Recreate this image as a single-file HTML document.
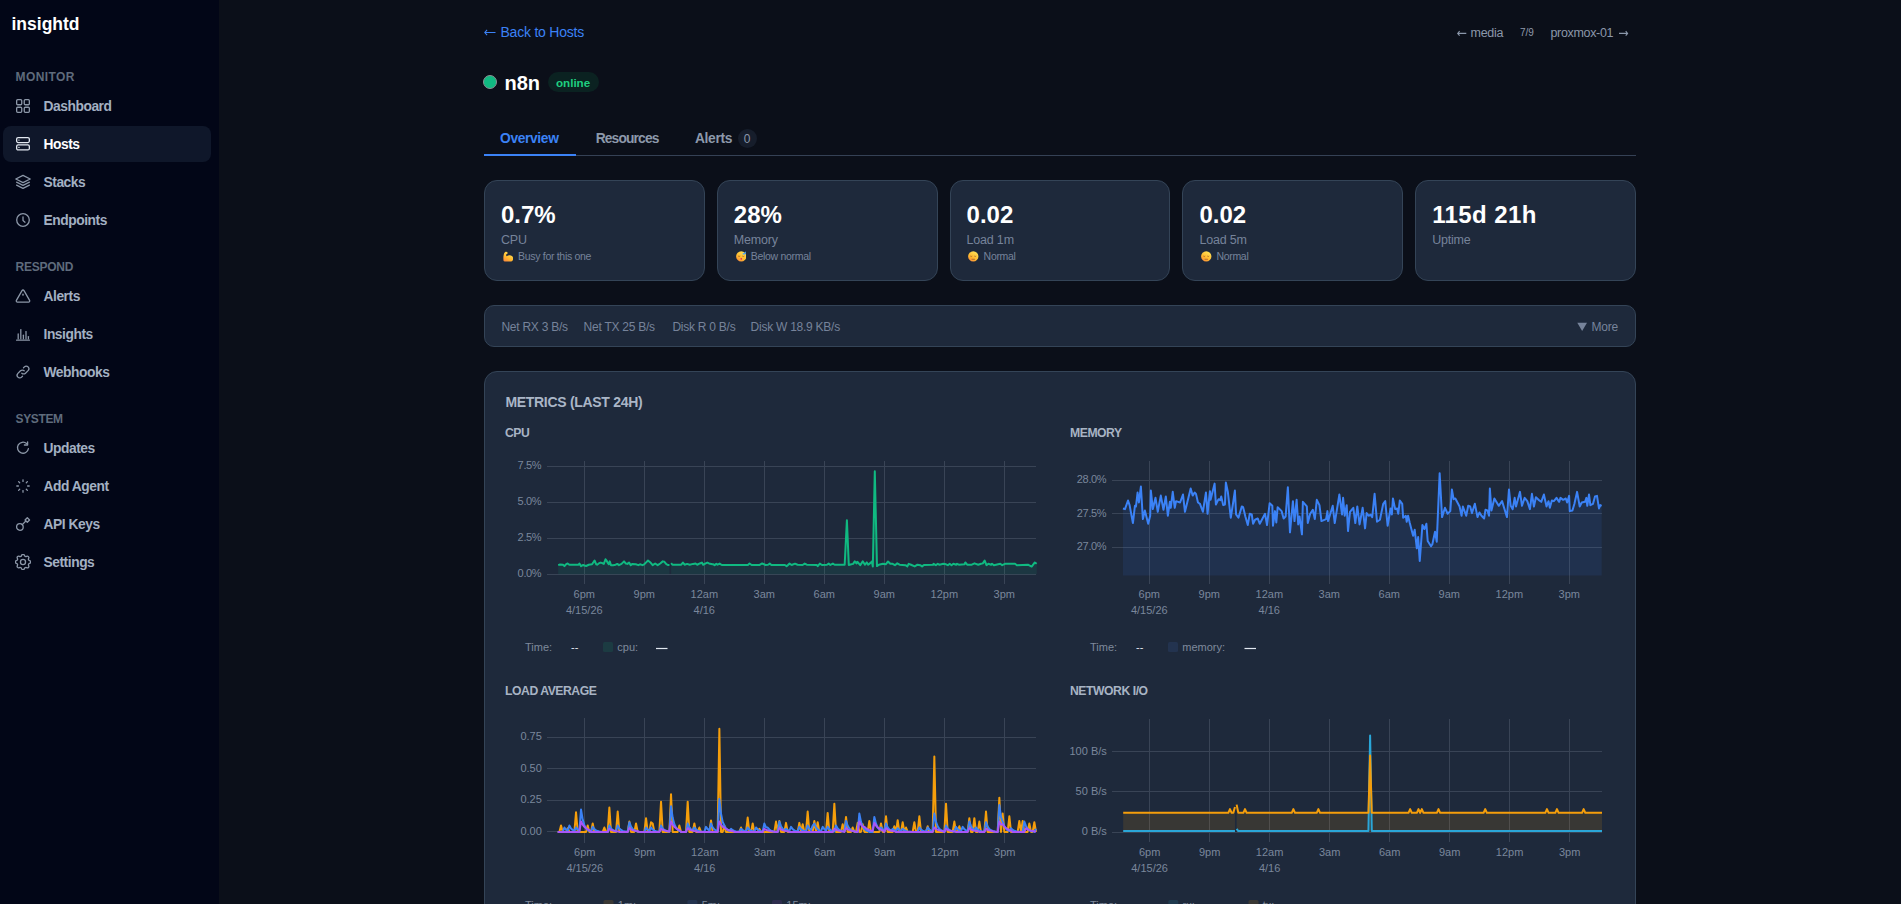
<!DOCTYPE html>
<html><head><meta charset="utf-8"><title>insightd - n8n</title>
<style>
html,body{margin:0;padding:0;width:1901px;height:904px;overflow:hidden;background:#0b0f19;font-family:"Liberation Sans", sans-serif;}
.t{position:absolute;white-space:nowrap;}
</style></head><body>
<div style="position:absolute;left:0;top:0;width:219px;height:904px;background:#020617"></div>
<div class="t" style="left:11.50px;top:15.99px;font-size:17.5px;line-height:17.5px;color:#ffffff;font-weight:700;">insightd</div>
<div style="position:absolute;left:3px;top:126px;width:208px;height:36px;border-radius:8px;background:#0f172a"></div>
<div class="t" style="left:15.50px;top:70.84px;font-size:12px;line-height:12px;color:#5f6b7c;font-weight:700;letter-spacing:0.4px;">MONITOR</div>
<svg style="position:absolute;left:15px;top:98px" width="16" height="16" viewBox="0 0 16 16" fill="none" stroke="#8c97a8" stroke-width="1.3" stroke-linecap="round" stroke-linejoin="round"><rect x="1.65" y="1.65" width="5.1" height="5.1" rx="1"/><rect x="9.25" y="1.65" width="5.1" height="5.1" rx="1"/><rect x="1.65" y="9.25" width="5.1" height="5.1" rx="1"/><rect x="9.25" y="9.25" width="5.1" height="5.1" rx="1"/></svg>
<div class="t" style="left:43.50px;top:99.92px;font-size:13.8px;line-height:13.8px;color:#a3b0c2;font-weight:700;letter-spacing:-0.45px;">Dashboard</div>
<svg style="position:absolute;left:15px;top:136px" width="16" height="16" viewBox="0 0 16 16" fill="none" stroke="#e2e8f0" stroke-width="1.3" stroke-linecap="round" stroke-linejoin="round"><rect x="1.65" y="1.6" width="12.7" height="5.0" rx="1.5"/><rect x="1.65" y="8.9" width="12.7" height="5.0" rx="1.5"/><path d="M3.9 4.1 h0.1"/><path d="M3.9 11.4 h0.1"/></svg>
<div class="t" style="left:43.50px;top:137.92px;font-size:13.8px;line-height:13.8px;color:#ffffff;font-weight:700;letter-spacing:-0.45px;">Hosts</div>
<svg style="position:absolute;left:15px;top:174px" width="16" height="16" viewBox="0 0 16 16" fill="none" stroke="#8c97a8" stroke-width="1.3" stroke-linecap="round" stroke-linejoin="round"><path d="M8 1.4 L15.2 5 L8 8.6 L0.8 5 Z"/><path d="M1.6 8.2 L8 11.4 L14.4 8.2"/><path d="M1.6 11.1 L8 14.3 L14.4 11.1"/></svg>
<div class="t" style="left:43.50px;top:175.92px;font-size:13.8px;line-height:13.8px;color:#a3b0c2;font-weight:700;letter-spacing:-0.45px;">Stacks</div>
<svg style="position:absolute;left:15px;top:212px" width="16" height="16" viewBox="0 0 16 16" fill="none" stroke="#8c97a8" stroke-width="1.3" stroke-linecap="round" stroke-linejoin="round"><circle cx="8" cy="8" r="6.3"/><path d="M8 4.8 V8.6 L10 10.2"/></svg>
<div class="t" style="left:43.50px;top:213.92px;font-size:13.8px;line-height:13.8px;color:#a3b0c2;font-weight:700;letter-spacing:-0.45px;">Endpoints</div>
<div class="t" style="left:15.50px;top:260.84px;font-size:12px;line-height:12px;color:#5f6b7c;font-weight:700;letter-spacing:-0.25px;">RESPOND</div>
<svg style="position:absolute;left:15px;top:288px" width="16" height="16" viewBox="0 0 16 16" fill="none" stroke="#8c97a8" stroke-width="1.3" stroke-linecap="round" stroke-linejoin="round"><path d="M7 2.6 a1.15 1.15 0 0 1 2 0 L14.6 12.4 a1.15 1.15 0 0 1 -1 1.7 H2.4 a1.15 1.15 0 0 1 -1 -1.7 Z"/><path d="M8 6.2 V7.2"/></svg>
<div class="t" style="left:43.50px;top:289.92px;font-size:13.8px;line-height:13.8px;color:#a3b0c2;font-weight:700;letter-spacing:-0.45px;">Alerts</div>
<svg style="position:absolute;left:15px;top:326px" width="16" height="16" viewBox="0 0 16 16" fill="none" stroke="#8c97a8" stroke-width="1.3" stroke-linecap="round" stroke-linejoin="round"><path d="M1.6 14.2 H14.4"/><path d="M3.2 12.8 V8"/><path d="M5.8 12.8 V3.6"/><path d="M8.4 12.8 V9.2"/><path d="M11 12.8 V5.6"/><path d="M13.4 12.8 V10.6"/></svg>
<div class="t" style="left:43.50px;top:327.92px;font-size:13.8px;line-height:13.8px;color:#a3b0c2;font-weight:700;letter-spacing:-0.45px;">Insights</div>
<svg style="position:absolute;left:15px;top:364px" width="16" height="16" viewBox="0 0 16 16" fill="none" stroke="#8c97a8" stroke-width="1.3" stroke-linecap="round" stroke-linejoin="round"><path d="M6.8 9.2 a2.6 2.6 0 0 0 3.7 0 l2.6 -2.6 a2.6 2.6 0 0 0 -3.7 -3.7 l-0.9 0.9"/><path d="M9.2 6.8 a2.6 2.6 0 0 0 -3.7 0 l-2.6 2.6 a2.6 2.6 0 0 0 3.7 3.7 l0.9 -0.9"/></svg>
<div class="t" style="left:43.50px;top:365.92px;font-size:13.8px;line-height:13.8px;color:#a3b0c2;font-weight:700;letter-spacing:-0.45px;">Webhooks</div>
<div class="t" style="left:15.50px;top:412.84px;font-size:12px;line-height:12px;color:#5f6b7c;font-weight:700;letter-spacing:-0.35px;">SYSTEM</div>
<svg style="position:absolute;left:15px;top:440px" width="16" height="16" viewBox="0 0 16 16" fill="none" stroke="#8c97a8" stroke-width="1.3" stroke-linecap="round" stroke-linejoin="round"><path d="M13.4 8.6 A5.5 5.5 0 1 1 11.6 3.6"/><path d="M12.6 1.8 V5 H9.4"/></svg>
<div class="t" style="left:43.50px;top:441.92px;font-size:13.8px;line-height:13.8px;color:#a3b0c2;font-weight:700;letter-spacing:-0.45px;">Updates</div>
<svg style="position:absolute;left:15px;top:478px" width="16" height="16" viewBox="0 0 16 16" fill="none" stroke="#8c97a8" stroke-width="1.3" stroke-linecap="round" stroke-linejoin="round"><path d="M8 1.8 V3.4"/><path d="M8 12.6 V14.2"/><path d="M1.8 8 H3.4"/><path d="M12.6 8 H14.2"/><path d="M3.6 3.6 L4.7 4.7"/><path d="M11.3 11.3 L12.4 12.4"/><path d="M3.6 12.4 L4.7 11.3"/><path d="M11.3 4.7 L12.4 3.6"/></svg>
<div class="t" style="left:43.50px;top:479.92px;font-size:13.8px;line-height:13.8px;color:#a3b0c2;font-weight:700;letter-spacing:-0.45px;">Add Agent</div>
<svg style="position:absolute;left:15px;top:516px" width="16" height="16" viewBox="0 0 16 16" fill="none" stroke="#8c97a8" stroke-width="1.3" stroke-linecap="round" stroke-linejoin="round"><circle cx="4.9" cy="11" r="3.3"/><path d="M7.3 8.6 L10.6 5.3"/><rect x="10.7" y="2.4" width="3.2" height="3.2" transform="rotate(-45 12.3 4)"/></svg>
<div class="t" style="left:43.50px;top:517.92px;font-size:13.8px;line-height:13.8px;color:#a3b0c2;font-weight:700;letter-spacing:-0.45px;">API Keys</div>
<svg style="position:absolute;left:15px;top:554px" width="16" height="16" viewBox="0 0 16 16" fill="none" stroke="#8c97a8" stroke-width="1.3" stroke-linecap="round" stroke-linejoin="round"><g transform="translate(-2.2 -2.2) scale(0.85)" stroke-width="1.55"><path d="M10.325 4.317c.426 -1.756 2.924 -1.756 3.35 0a1.724 1.724 0 0 0 2.573 1.066c1.543 -.94 3.31 .826 2.37 2.37a1.724 1.724 0 0 0 1.065 2.572c1.756 .426 1.756 2.924 0 3.35a1.724 1.724 0 0 0 -1.066 2.573c.94 1.543 -.826 3.31 -2.37 2.37a1.724 1.724 0 0 0 -2.572 1.065c-.426 1.756 -2.924 1.756 -3.35 0a1.724 1.724 0 0 0 -2.573 -1.066c-1.543 .94 -3.31 -.826 -2.37 -2.37a1.724 1.724 0 0 0 -1.065 -2.572c-1.756 -.426 -1.756 -2.924 0 -3.35a1.724 1.724 0 0 0 1.066 -2.573c-.94 -1.543 .826 -3.31 2.37 -2.37c1 .608 2.296 .07 2.572 -1.065z"/><circle cx="12" cy="12" r="3"/></g></svg>
<div class="t" style="left:43.50px;top:555.92px;font-size:13.8px;line-height:13.8px;color:#a3b0c2;font-weight:700;letter-spacing:-0.45px;">Settings</div>
<svg style="position:absolute;left:0;top:0;overflow:visible" width="1" height="1"><path d="M495.5 32.5 H485.1 M487.1 29.9 L484.8 32.5 L487.1 35.1" fill="none" stroke="#3b82f6" stroke-width="1.1"/></svg>
<div class="t" style="left:500.50px;top:25.15px;font-size:14px;line-height:14px;color:#3b82f6;font-weight:400;letter-spacing:-0.22px;">Back to Hosts</div>
<svg style="position:absolute;left:0;top:0;overflow:visible" width="1" height="1"><path d="M1466.3 33.4 H1458.0 M1459.6000000000001 31.2 L1457.7 33.4 L1459.6000000000001 35.6" fill="none" stroke="#8b97aa" stroke-width="1.1"/></svg>
<div class="t" style="left:1470.50px;top:27.42px;font-size:12.5px;line-height:12.5px;color:#8b97aa;font-weight:400;letter-spacing:-0.25px;">media</div>
<div class="t" style="left:1520.00px;top:27.54px;font-size:10px;line-height:10px;color:#8f9aab;font-weight:400;">7/9</div>
<div class="t" style="left:1550.50px;top:27.42px;font-size:12.5px;line-height:12.5px;color:#8b97aa;font-weight:400;letter-spacing:-0.33px;">proxmox-01</div>
<svg style="position:absolute;left:0;top:0;overflow:visible" width="1" height="1"><path d="M1619 33.4 H1627.3000000000002 M1625.7 31.2 L1627.6000000000001 33.4 L1625.7 35.6" fill="none" stroke="#8b97aa" stroke-width="1.1"/></svg>
<div style="position:absolute;left:483px;top:74.7px;width:12px;height:12px;border-radius:50%;background:#10b981;border:1px solid #8a9094"></div>
<div class="t" style="left:504.50px;top:73.07px;font-size:20px;line-height:20px;color:#ffffff;font-weight:700;">n8n</div>
<div style="position:absolute;left:548px;top:72px;width:50.5px;height:20px;border-radius:10px;background:#0b2221"></div>
<div class="t" style="left:556.00px;top:77.18px;font-size:11.6px;line-height:11.6px;color:#1fcf80;font-weight:700;">online</div>
<div style="position:absolute;left:484px;top:155px;width:1152px;height:1px;background:#354155"></div>
<div style="position:absolute;left:484px;top:154px;width:92px;height:2px;background:#3b82f6"></div>
<div class="t" style="left:500.00px;top:131.92px;font-size:13.8px;line-height:13.8px;color:#3b82f6;font-weight:700;letter-spacing:-0.35px;">Overview</div>
<div class="t" style="left:595.70px;top:131.92px;font-size:13.8px;line-height:13.8px;color:#8d99ab;font-weight:700;letter-spacing:-0.85px;">Resources</div>
<div class="t" style="left:695.00px;top:131.92px;font-size:13.8px;line-height:13.8px;color:#8d99ab;font-weight:700;letter-spacing:-0.35px;">Alerts</div>
<div style="position:absolute;left:737.5px;top:128.5px;width:19.5px;height:19.5px;border-radius:50%;background:#161d2b"></div>
<div class="t" style="left:747.20px;transform:translateX(-50%);top:132.84px;font-size:12px;line-height:12px;color:#8b97aa;font-weight:400;">0</div>
<svg width="0" height="0" style="position:absolute"><defs><linearGradient id="eg" x1="0.8" y1="0" x2="0.2" y2="1"><stop offset="0" stop-color="#ffe55c"/><stop offset="0.6" stop-color="#ffb92e"/><stop offset="1" stop-color="#f98a3c"/></linearGradient></defs></svg>
<div style="position:absolute;left:484.00px;top:180px;width:220.80px;height:101px;box-sizing:border-box;border-radius:13px;background:#1e293b;border:1px solid #344457"></div>
<div class="t" style="left:501.00px;top:203.18px;font-size:24px;line-height:24px;color:#ffffff;font-weight:700;">0.7%</div>
<div class="t" style="left:501.00px;top:234.02px;font-size:12.5px;line-height:12.5px;color:#76839a;font-weight:400;letter-spacing:-0.2px;">CPU</div>
<svg style="position:absolute;left:502.70px;top:251.30px" width="10.5" height="10.5" viewBox="0 0 10 10"><path d="M0.6 9.6 C0.1 7.4 0.3 4.4 1.1 2.2 C1.6 0.6 3.6 0.2 4.3 1.4 C4.7 2.2 4.2 3.0 3.2 3.2 C2.8 4.0 3.0 4.6 3.6 4.9 C4.8 3.8 7.4 3.5 8.8 5.0 C10.3 6.6 9.8 9.4 7.8 10 L1.6 10 Z" fill="url(#eg)"/></svg>
<div class="t" style="left:518.00px;top:251.11px;font-size:10.5px;line-height:10.5px;color:#76839a;font-weight:400;letter-spacing:-0.3px;">Busy for this one</div>
<div style="position:absolute;left:716.80px;top:180px;width:220.80px;height:101px;box-sizing:border-box;border-radius:13px;background:#1e293b;border:1px solid #344457"></div>
<div class="t" style="left:733.80px;top:203.18px;font-size:24px;line-height:24px;color:#ffffff;font-weight:700;">28%</div>
<div class="t" style="left:733.80px;top:234.02px;font-size:12.5px;line-height:12.5px;color:#76839a;font-weight:400;letter-spacing:-0.2px;">Memory</div>
<svg style="position:absolute;left:735.50px;top:251.30px" width="10.5" height="10.5" viewBox="0 0 10 10"><circle cx="5" cy="5.2" r="4.9" fill="url(#eg)"/><path d="M2 4.8 q1 0.8 2 0 M6 4.8 q1 0.8 2 0" stroke="#9b5a2a" stroke-width="0.7" fill="none"/><ellipse cx="5" cy="7.5" rx="0.7" ry="0.9" fill="#d6186e"/><path d="M7.2 2.6 L9.6 0.2 L9.4 2.4 Z" fill="#3b9bf5"/><ellipse cx="7.6" cy="2.6" rx="1.4" ry="0.8" fill="#4aa3f7"/></svg>
<div class="t" style="left:750.80px;top:251.11px;font-size:10.5px;line-height:10.5px;color:#76839a;font-weight:400;letter-spacing:-0.3px;">Below normal</div>
<div style="position:absolute;left:949.60px;top:180px;width:220.80px;height:101px;box-sizing:border-box;border-radius:13px;background:#1e293b;border:1px solid #344457"></div>
<div class="t" style="left:966.60px;top:203.18px;font-size:24px;line-height:24px;color:#ffffff;font-weight:700;">0.02</div>
<div class="t" style="left:966.60px;top:234.02px;font-size:12.5px;line-height:12.5px;color:#76839a;font-weight:400;letter-spacing:-0.2px;">Load 1m</div>
<svg style="position:absolute;left:968.30px;top:251.30px" width="10.5" height="10.5" viewBox="0 0 10 10"><circle cx="5" cy="5.2" r="4.9" fill="url(#eg)"/><path d="M2.2 4.8 q0.9 0.9 1.8 0 M6 4.8 q0.9 0.9 1.8 0" stroke="#9b5a2a" stroke-width="0.7" fill="none"/><path d="M3.4 7.9 h3.2" stroke="#9b5a2a" stroke-width="0.7"/></svg>
<div class="t" style="left:983.60px;top:251.11px;font-size:10.5px;line-height:10.5px;color:#76839a;font-weight:400;letter-spacing:-0.3px;">Normal</div>
<div style="position:absolute;left:1182.40px;top:180px;width:220.80px;height:101px;box-sizing:border-box;border-radius:13px;background:#1e293b;border:1px solid #344457"></div>
<div class="t" style="left:1199.40px;top:203.18px;font-size:24px;line-height:24px;color:#ffffff;font-weight:700;">0.02</div>
<div class="t" style="left:1199.40px;top:234.02px;font-size:12.5px;line-height:12.5px;color:#76839a;font-weight:400;letter-spacing:-0.2px;">Load 5m</div>
<svg style="position:absolute;left:1201.10px;top:251.30px" width="10.5" height="10.5" viewBox="0 0 10 10"><circle cx="5" cy="5.2" r="4.9" fill="url(#eg)"/><path d="M2.2 4.8 q0.9 0.9 1.8 0 M6 4.8 q0.9 0.9 1.8 0" stroke="#9b5a2a" stroke-width="0.7" fill="none"/><path d="M3.4 7.9 h3.2" stroke="#9b5a2a" stroke-width="0.7"/></svg>
<div class="t" style="left:1216.40px;top:251.11px;font-size:10.5px;line-height:10.5px;color:#76839a;font-weight:400;letter-spacing:-0.3px;">Normal</div>
<div style="position:absolute;left:1415.20px;top:180px;width:220.80px;height:101px;box-sizing:border-box;border-radius:13px;background:#1e293b;border:1px solid #344457"></div>
<div class="t" style="left:1432.20px;top:203.18px;font-size:24px;line-height:24px;color:#ffffff;font-weight:700;letter-spacing:0.4px;">115d 21h</div>
<div class="t" style="left:1432.20px;top:234.02px;font-size:12.5px;line-height:12.5px;color:#76839a;font-weight:400;letter-spacing:-0.2px;">Uptime</div>
<div style="position:absolute;left:484px;top:305px;width:1152px;height:42px;box-sizing:border-box;border-radius:10px;background:#1e293b;border:1px solid #344457"></div>
<div class="t" style="left:501.40px;top:320.84px;font-size:12px;line-height:12px;color:#76839a;font-weight:400;letter-spacing:-0.25px;">Net RX 3 B/s</div>
<div class="t" style="left:583.60px;top:320.84px;font-size:12px;line-height:12px;color:#76839a;font-weight:400;letter-spacing:-0.25px;">Net TX 25 B/s</div>
<div class="t" style="left:672.40px;top:320.84px;font-size:12px;line-height:12px;color:#76839a;font-weight:400;letter-spacing:-0.25px;">Disk R 0 B/s</div>
<div class="t" style="left:750.60px;top:320.84px;font-size:12px;line-height:12px;color:#76839a;font-weight:400;letter-spacing:-0.25px;">Disk W 18.9 KB/s</div>
<svg style="position:absolute;left:1577px;top:322px" width="11" height="10"><path d="M0.3 0.8 H10 L5.15 9 Z" fill="#76839a"/></svg>
<div class="t" style="left:1591.60px;top:320.84px;font-size:12px;line-height:12px;color:#76839a;font-weight:400;letter-spacing:-0.25px;">More</div>
<div style="position:absolute;left:484px;top:371px;width:1152px;height:600px;box-sizing:border-box;border-radius:13px;background:#1e293b;border:1px solid #344457"></div>
<div class="t" style="left:505.40px;top:395.15px;font-size:14px;line-height:14px;color:#aab6c7;font-weight:700;letter-spacing:-0.3px;">METRICS (LAST 24H)</div>
<div class="t" style="left:505.00px;top:426.67px;font-size:12.2px;line-height:12.2px;color:#a8b4c4;font-weight:700;letter-spacing:-0.45px;">CPU</div>
<div class="t" style="left:1070.00px;top:426.67px;font-size:12.2px;line-height:12.2px;color:#a8b4c4;font-weight:700;letter-spacing:-0.45px;">MEMORY</div>
<div class="t" style="left:505.00px;top:684.87px;font-size:12.2px;line-height:12.2px;color:#a8b4c4;font-weight:700;letter-spacing:-0.45px;">LOAD AVERAGE</div>
<div class="t" style="left:1070.00px;top:684.87px;font-size:12.2px;line-height:12.2px;color:#a8b4c4;font-weight:700;letter-spacing:-0.45px;">NETWORK I/O</div>
<svg style="position:absolute;left:0;top:0" width="1901" height="904" viewBox="0 0 1901 904"><g stroke="#394456" stroke-width="1" shape-rendering="crispEdges"><line x1="547.1" y1="574.20" x2="1036.4" y2="574.20"/><line x1="547.1" y1="538.20" x2="1036.4" y2="538.20"/><line x1="547.1" y1="502.20" x2="1036.4" y2="502.20"/><line x1="547.1" y1="466.20" x2="1036.4" y2="466.20"/><line x1="584.30" y1="460.5" x2="584.30" y2="584.2"/><line x1="644.30" y1="460.5" x2="644.30" y2="584.2"/><line x1="704.30" y1="460.5" x2="704.30" y2="584.2"/><line x1="764.30" y1="460.5" x2="764.30" y2="584.2"/><line x1="824.30" y1="460.5" x2="824.30" y2="584.2"/><line x1="884.30" y1="460.5" x2="884.30" y2="584.2"/><line x1="944.30" y1="460.5" x2="944.30" y2="584.2"/><line x1="1004.30" y1="460.5" x2="1004.30" y2="584.2"/><line x1="1112.4" y1="547.10" x2="1602.0" y2="547.10"/><line x1="1112.4" y1="513.65" x2="1602.0" y2="513.65"/><line x1="1112.4" y1="480.20" x2="1602.0" y2="480.20"/><line x1="1149.30" y1="460.5" x2="1149.30" y2="584.2"/><line x1="1209.30" y1="460.5" x2="1209.30" y2="584.2"/><line x1="1269.30" y1="460.5" x2="1269.30" y2="584.2"/><line x1="1329.30" y1="460.5" x2="1329.30" y2="584.2"/><line x1="1389.30" y1="460.5" x2="1389.30" y2="584.2"/><line x1="1449.30" y1="460.5" x2="1449.30" y2="584.2"/><line x1="1509.30" y1="460.5" x2="1509.30" y2="584.2"/><line x1="1569.30" y1="460.5" x2="1569.30" y2="584.2"/><line x1="547.1" y1="831.90" x2="1036.0" y2="831.90"/><line x1="547.1" y1="800.27" x2="1036.0" y2="800.27"/><line x1="547.1" y1="768.64" x2="1036.0" y2="768.64"/><line x1="547.1" y1="737.01" x2="1036.0" y2="737.01"/><line x1="584.80" y1="718.4" x2="584.80" y2="842.8"/><line x1="644.80" y1="718.4" x2="644.80" y2="842.8"/><line x1="704.80" y1="718.4" x2="704.80" y2="842.8"/><line x1="764.80" y1="718.4" x2="764.80" y2="842.8"/><line x1="824.80" y1="718.4" x2="824.80" y2="842.8"/><line x1="884.80" y1="718.4" x2="884.80" y2="842.8"/><line x1="944.80" y1="718.4" x2="944.80" y2="842.8"/><line x1="1004.80" y1="718.4" x2="1004.80" y2="842.8"/><line x1="1112.4" y1="832.00" x2="1602.0" y2="832.00"/><line x1="1112.4" y1="791.75" x2="1602.0" y2="791.75"/><line x1="1112.4" y1="751.50" x2="1602.0" y2="751.50"/><line x1="1149.60" y1="718.5" x2="1149.60" y2="842.2"/><line x1="1209.60" y1="718.5" x2="1209.60" y2="842.2"/><line x1="1269.60" y1="718.5" x2="1269.60" y2="842.2"/><line x1="1329.60" y1="718.5" x2="1329.60" y2="842.2"/><line x1="1389.60" y1="718.5" x2="1389.60" y2="842.2"/><line x1="1449.60" y1="718.5" x2="1449.60" y2="842.2"/><line x1="1509.60" y1="718.5" x2="1509.60" y2="842.2"/><line x1="1569.60" y1="718.5" x2="1569.60" y2="842.2"/></g><path d="M558.20 565.15 L560.05 564.48 L563.00 564.73 L564.43 566.16 L565.94 564.31 L567.62 563.47 L569.31 564.73 L578.57 564.73 L579.41 563.47 L581.09 566.16 L583.20 564.98 L584.46 565.57 L586.14 565.99 L588.67 564.73 L592.03 564.31 L594.56 560.52 L596.24 564.31 L597.08 564.73 L598.77 563.47 L600.45 562.62 L602.13 563.05 L603.82 563.89 L605.50 559.26 L606.76 560.94 L607.60 562.62 L608.87 564.31 L609.71 561.36 L610.97 565.15 L613.07 565.15 L615.60 564.73 L617.28 563.89 L618.97 565.15 L621.49 563.89 L624.02 561.36 L625.70 563.47 L627.38 563.89 L629.07 562.62 L630.75 565.15 L632.43 563.89 L635.80 564.31 L638.32 565.15 L640.01 564.31 L642.53 565.15 L644.22 564.31 L645.90 562.62 L648.00 560.52 L650.11 562.20 L652.63 565.15 L655.16 563.47 L657.68 565.15 L660.21 563.47 L662.73 561.36 L664.42 561.78 L666.10 563.89 L667.78 564.98 L669.47 564.98 L669.47 574.20 L558.20 574.20 Z" fill="rgba(16,185,129,0.10)" stroke="none"/><path d="M671.15 563.05 L672.41 564.73 L681.25 564.73 L682.93 562.62 L684.62 564.73 L687.14 563.89 L689.67 564.73 L693.03 563.89 L695.56 563.47 L697.24 564.73 L699.77 563.47 L701.87 562.62 L703.13 564.73 L705.66 563.47 L707.34 562.62 L709.02 563.47 L712.39 564.31 L713.37 564.31 L714.63 565.15 L716.31 563.89 L717.57 564.73 L719.68 563.63 L721.78 564.98 L747.87 564.98 L749.56 563.47 L751.66 564.98 L759.66 564.98 L762.18 563.47 L765.55 564.98 L768.07 564.73 L769.76 563.63 L771.44 564.98 L784.91 564.98 L786.59 566.16 L789.54 563.63 L791.64 564.98 L795.01 563.63 L797.53 564.73 L802.58 564.98 L804.69 563.63 L806.79 564.73 L816.89 564.98 L817.73 566.16 L819.84 563.63 L821.94 564.98 L826.99 564.73 L828.67 563.63 L830.36 564.98 L832.88 563.63 L834.57 564.73 L844.67 564.73 L846.90 520.20 L848.80 565.00 L851.40 564.31 L853.08 563.89 L854.77 561.36 L856.45 563.47 L857.29 561.78 L858.55 563.05 L860.24 565.15 L862.76 561.36 L865.00 564.73 L866.84 562.43 L868.22 564.73 L870.52 562.89 L871.90 561.51 L872.82 566.57 L874.80 471.20 L876.97 566.11 L878.81 564.73 L882.95 563.81 L885.71 564.27 L888.01 561.51 L890.32 563.81 L892.62 563.81 L894.92 565.19 L897.22 563.35 L899.52 564.73 L905.50 565.19 L907.35 566.39 L908.73 563.81 L911.03 564.73 L914.71 566.39 L917.47 564.73 L920.23 565.19 L922.08 566.39 L923.92 564.91 L933.12 564.73 L933.58 563.81 L935.88 565.19 L937.72 563.81 L939.57 564.73 L943.25 563.81 L946.01 564.27 L947.85 565.19 L949.69 563.81 L951.53 565.19 L953.37 563.81 L956.14 564.73 L957.06 563.81 L958.90 564.73 L964.42 564.27 L965.34 562.43 L967.18 564.73 L971.79 564.73 L974.55 563.35 L978.23 564.73 L980.99 563.81 L982.83 563.35 L984.67 560.59 L986.51 565.19 L988.36 563.81 L991.12 564.73 L992.04 563.81 L993.88 565.19 L1000.32 563.81 L1002.16 565.19 L1004.93 563.81 L1015.05 563.81 L1016.89 565.19 L1027.94 564.73 L1031.62 566.57 L1034.84 562.43 L1036.69 563.81 L1036.69 574.20 L671.15 574.20 Z" fill="rgba(16,185,129,0.10)" stroke="none"/><path d="M558.20 565.15 L560.05 564.48 L563.00 564.73 L564.43 566.16 L565.94 564.31 L567.62 563.47 L569.31 564.73 L578.57 564.73 L579.41 563.47 L581.09 566.16 L583.20 564.98 L584.46 565.57 L586.14 565.99 L588.67 564.73 L592.03 564.31 L594.56 560.52 L596.24 564.31 L597.08 564.73 L598.77 563.47 L600.45 562.62 L602.13 563.05 L603.82 563.89 L605.50 559.26 L606.76 560.94 L607.60 562.62 L608.87 564.31 L609.71 561.36 L610.97 565.15 L613.07 565.15 L615.60 564.73 L617.28 563.89 L618.97 565.15 L621.49 563.89 L624.02 561.36 L625.70 563.47 L627.38 563.89 L629.07 562.62 L630.75 565.15 L632.43 563.89 L635.80 564.31 L638.32 565.15 L640.01 564.31 L642.53 565.15 L644.22 564.31 L645.90 562.62 L648.00 560.52 L650.11 562.20 L652.63 565.15 L655.16 563.47 L657.68 565.15 L660.21 563.47 L662.73 561.36 L664.42 561.78 L666.10 563.89 L667.78 564.98 L669.47 564.98" fill="none" stroke="#10b981" stroke-width="2" stroke-linejoin="round"/><path d="M671.15 563.05 L672.41 564.73 L681.25 564.73 L682.93 562.62 L684.62 564.73 L687.14 563.89 L689.67 564.73 L693.03 563.89 L695.56 563.47 L697.24 564.73 L699.77 563.47 L701.87 562.62 L703.13 564.73 L705.66 563.47 L707.34 562.62 L709.02 563.47 L712.39 564.31 L713.37 564.31 L714.63 565.15 L716.31 563.89 L717.57 564.73 L719.68 563.63 L721.78 564.98 L747.87 564.98 L749.56 563.47 L751.66 564.98 L759.66 564.98 L762.18 563.47 L765.55 564.98 L768.07 564.73 L769.76 563.63 L771.44 564.98 L784.91 564.98 L786.59 566.16 L789.54 563.63 L791.64 564.98 L795.01 563.63 L797.53 564.73 L802.58 564.98 L804.69 563.63 L806.79 564.73 L816.89 564.98 L817.73 566.16 L819.84 563.63 L821.94 564.98 L826.99 564.73 L828.67 563.63 L830.36 564.98 L832.88 563.63 L834.57 564.73 L844.67 564.73 L846.90 520.20 L848.80 565.00 L851.40 564.31 L853.08 563.89 L854.77 561.36 L856.45 563.47 L857.29 561.78 L858.55 563.05 L860.24 565.15 L862.76 561.36 L865.00 564.73 L866.84 562.43 L868.22 564.73 L870.52 562.89 L871.90 561.51 L872.82 566.57 L874.80 471.20 L876.97 566.11 L878.81 564.73 L882.95 563.81 L885.71 564.27 L888.01 561.51 L890.32 563.81 L892.62 563.81 L894.92 565.19 L897.22 563.35 L899.52 564.73 L905.50 565.19 L907.35 566.39 L908.73 563.81 L911.03 564.73 L914.71 566.39 L917.47 564.73 L920.23 565.19 L922.08 566.39 L923.92 564.91 L933.12 564.73 L933.58 563.81 L935.88 565.19 L937.72 563.81 L939.57 564.73 L943.25 563.81 L946.01 564.27 L947.85 565.19 L949.69 563.81 L951.53 565.19 L953.37 563.81 L956.14 564.73 L957.06 563.81 L958.90 564.73 L964.42 564.27 L965.34 562.43 L967.18 564.73 L971.79 564.73 L974.55 563.35 L978.23 564.73 L980.99 563.81 L982.83 563.35 L984.67 560.59 L986.51 565.19 L988.36 563.81 L991.12 564.73 L992.04 563.81 L993.88 565.19 L1000.32 563.81 L1002.16 565.19 L1004.93 563.81 L1015.05 563.81 L1016.89 565.19 L1027.94 564.73 L1031.62 566.57 L1034.84 562.43 L1036.69 563.81" fill="none" stroke="#10b981" stroke-width="2" stroke-linejoin="round"/><path d="M1122.97 508.46 L1124.96 509.12 L1128.01 500.49 L1129.60 505.14 L1132.92 523.06 L1134.92 505.80 L1135.98 506.47 L1137.57 492.53 L1138.90 502.49 L1140.89 486.55 L1142.88 519.08 L1144.87 510.45 L1148.19 523.73 L1150.18 515.76 L1150.85 490.54 L1152.84 509.12 L1155.49 497.84 L1157.75 511.78 L1160.80 495.58 L1163.46 509.79 L1165.85 496.51 L1167.84 515.76 L1169.83 501.82 L1170.76 507.80 L1172.75 491.86 L1174.75 507.80 L1176.07 501.16 L1180.06 502.49 L1182.98 494.52 L1184.97 511.78 L1190.68 488.54 L1192.67 495.58 L1194.66 492.53 L1195.99 493.86 L1197.98 502.49 L1199.97 503.81 L1202.89 511.78 L1205.95 492.53 L1207.54 513.77 L1209.93 491.20 L1210.59 499.83 L1214.58 483.63 L1215.90 504.48 L1218.56 499.17 L1220.28 500.10 L1221.21 496.51 L1223.20 505.14 L1224.93 504.48 L1225.86 482.57 L1227.85 491.86 L1230.77 517.75 L1233.16 502.49 L1234.89 490.54 L1236.08 514.43 L1238.47 517.75 L1241.79 506.47 L1243.12 507.13 L1245.38 516.43 L1247.77 525.06 L1249.76 513.77 L1251.75 514.43 L1253.08 523.73 L1255.07 519.75 L1257.72 518.42 L1259.72 523.73 L1265.03 513.77 L1267.02 525.06 L1269.67 503.15 L1272.33 505.80 L1272.99 525.72 L1274.98 511.12 L1276.31 522.40 L1277.64 507.13 L1281.62 511.12 L1283.61 518.42 L1285.61 516.43 L1287.86 487.22 L1289.99 532.36 L1292.91 501.16 L1294.50 521.07 L1296.63 499.83 L1298.22 524.39 L1299.55 516.43 L1301.94 534.35 L1302.87 501.82 L1306.85 506.47 L1307.78 523.06 L1310.17 513.77 L1312.82 509.79 L1314.81 519.08 L1316.81 499.83 L1319.46 505.14 L1321.45 521.07 L1326.10 519.08 L1327.43 511.12 L1328.09 521.07 L1332.74 505.80 L1334.73 523.06 L1339.38 494.52 L1342.03 514.43 L1343.09 497.84 L1344.69 515.76 L1346.68 505.14 L1348.01 531.03 L1350.00 511.78 L1353.32 507.80 L1355.31 523.06 L1357.30 506.47 L1359.56 524.39 L1362.66 507.80 L1365.05 528.37 L1366.64 513.11 L1368.63 515.76 L1370.62 514.70 L1372.21 517.09 L1374.60 493.86 L1376.99 521.74 L1379.92 519.75 L1383.23 503.81 L1385.23 501.16 L1387.62 525.72 L1390.54 508.46 L1391.86 514.43 L1392.93 498.50 L1395.18 509.12 L1397.17 508.46 L1398.24 513.77 L1399.83 500.49 L1402.22 503.81 L1403.15 517.75 L1405.80 515.76 L1406.73 521.74 L1408.06 515.76 L1409.79 523.06 L1413.11 535.68 L1414.70 529.70 L1416.82 548.29 L1418.15 537.00 L1419.75 560.90 L1422.40 525.06 L1424.39 529.04 L1426.38 523.73 L1427.71 540.99 L1431.03 546.30 L1432.36 544.31 L1435.01 531.69 L1436.74 541.65 L1439.66 473.28 L1442.05 517.09 L1444.97 507.80 L1447.63 513.77 L1450.28 511.12 L1451.87 489.47 L1453.60 499.17 L1455.33 498.50 L1459.58 506.47 L1461.57 515.76 L1462.89 506.47 L1466.21 515.76 L1468.20 505.80 L1470.20 506.47 L1471.92 513.11 L1474.84 503.81 L1477.50 517.09 L1479.49 512.44 L1481.48 515.76 L1484.14 518.42 L1485.46 509.79 L1487.46 510.45 L1489.05 515.76 L1489.85 488.54 L1491.44 510.45 L1494.36 498.50 L1498.74 505.80 L1502.06 501.16 L1506.97 517.09 L1508.96 489.47 L1510.69 505.80 L1512.68 509.12 L1514.67 497.84 L1516.00 506.47 L1519.98 491.86 L1521.98 505.80 L1524.63 497.84 L1527.29 501.16 L1529.94 509.12 L1531.93 493.86 L1533.92 506.47 L1535.92 497.17 L1538.57 499.83 L1541.23 501.82 L1543.88 494.52 L1546.54 506.47 L1548.53 501.16 L1549.86 507.80 L1551.85 500.49 L1553.84 501.16 L1556.49 497.84 L1559.15 501.82 L1560.48 497.84 L1563.13 499.83 L1565.79 498.50 L1567.12 502.49 L1569.11 495.85 L1569.77 511.12 L1572.43 510.45 L1574.42 503.81 L1577.07 491.86 L1579.73 506.47 L1581.72 502.49 L1585.04 501.82 L1586.37 497.84 L1587.30 505.80 L1589.02 494.52 L1590.35 505.14 L1593.01 503.81 L1595.00 496.51 L1596.99 495.85 L1598.98 508.46 L1600.31 505.14 L1601.64 505.80 L1601.64 575.40 L1122.97 575.40 Z" fill="rgba(59,130,246,0.10)" stroke="none"/><path d="M1122.97 508.46 L1124.96 509.12 L1128.01 500.49 L1129.60 505.14 L1132.92 523.06 L1134.92 505.80 L1135.98 506.47 L1137.57 492.53 L1138.90 502.49 L1140.89 486.55 L1142.88 519.08 L1144.87 510.45 L1148.19 523.73 L1150.18 515.76 L1150.85 490.54 L1152.84 509.12 L1155.49 497.84 L1157.75 511.78 L1160.80 495.58 L1163.46 509.79 L1165.85 496.51 L1167.84 515.76 L1169.83 501.82 L1170.76 507.80 L1172.75 491.86 L1174.75 507.80 L1176.07 501.16 L1180.06 502.49 L1182.98 494.52 L1184.97 511.78 L1190.68 488.54 L1192.67 495.58 L1194.66 492.53 L1195.99 493.86 L1197.98 502.49 L1199.97 503.81 L1202.89 511.78 L1205.95 492.53 L1207.54 513.77 L1209.93 491.20 L1210.59 499.83 L1214.58 483.63 L1215.90 504.48 L1218.56 499.17 L1220.28 500.10 L1221.21 496.51 L1223.20 505.14 L1224.93 504.48 L1225.86 482.57 L1227.85 491.86 L1230.77 517.75 L1233.16 502.49 L1234.89 490.54 L1236.08 514.43 L1238.47 517.75 L1241.79 506.47 L1243.12 507.13 L1245.38 516.43 L1247.77 525.06 L1249.76 513.77 L1251.75 514.43 L1253.08 523.73 L1255.07 519.75 L1257.72 518.42 L1259.72 523.73 L1265.03 513.77 L1267.02 525.06 L1269.67 503.15 L1272.33 505.80 L1272.99 525.72 L1274.98 511.12 L1276.31 522.40 L1277.64 507.13 L1281.62 511.12 L1283.61 518.42 L1285.61 516.43 L1287.86 487.22 L1289.99 532.36 L1292.91 501.16 L1294.50 521.07 L1296.63 499.83 L1298.22 524.39 L1299.55 516.43 L1301.94 534.35 L1302.87 501.82 L1306.85 506.47 L1307.78 523.06 L1310.17 513.77 L1312.82 509.79 L1314.81 519.08 L1316.81 499.83 L1319.46 505.14 L1321.45 521.07 L1326.10 519.08 L1327.43 511.12 L1328.09 521.07 L1332.74 505.80 L1334.73 523.06 L1339.38 494.52 L1342.03 514.43 L1343.09 497.84 L1344.69 515.76 L1346.68 505.14 L1348.01 531.03 L1350.00 511.78 L1353.32 507.80 L1355.31 523.06 L1357.30 506.47 L1359.56 524.39 L1362.66 507.80 L1365.05 528.37 L1366.64 513.11 L1368.63 515.76 L1370.62 514.70 L1372.21 517.09 L1374.60 493.86 L1376.99 521.74 L1379.92 519.75 L1383.23 503.81 L1385.23 501.16 L1387.62 525.72 L1390.54 508.46 L1391.86 514.43 L1392.93 498.50 L1395.18 509.12 L1397.17 508.46 L1398.24 513.77 L1399.83 500.49 L1402.22 503.81 L1403.15 517.75 L1405.80 515.76 L1406.73 521.74 L1408.06 515.76 L1409.79 523.06 L1413.11 535.68 L1414.70 529.70 L1416.82 548.29 L1418.15 537.00 L1419.75 560.90 L1422.40 525.06 L1424.39 529.04 L1426.38 523.73 L1427.71 540.99 L1431.03 546.30 L1432.36 544.31 L1435.01 531.69 L1436.74 541.65 L1439.66 473.28 L1442.05 517.09 L1444.97 507.80 L1447.63 513.77 L1450.28 511.12 L1451.87 489.47 L1453.60 499.17 L1455.33 498.50 L1459.58 506.47 L1461.57 515.76 L1462.89 506.47 L1466.21 515.76 L1468.20 505.80 L1470.20 506.47 L1471.92 513.11 L1474.84 503.81 L1477.50 517.09 L1479.49 512.44 L1481.48 515.76 L1484.14 518.42 L1485.46 509.79 L1487.46 510.45 L1489.05 515.76 L1489.85 488.54 L1491.44 510.45 L1494.36 498.50 L1498.74 505.80 L1502.06 501.16 L1506.97 517.09 L1508.96 489.47 L1510.69 505.80 L1512.68 509.12 L1514.67 497.84 L1516.00 506.47 L1519.98 491.86 L1521.98 505.80 L1524.63 497.84 L1527.29 501.16 L1529.94 509.12 L1531.93 493.86 L1533.92 506.47 L1535.92 497.17 L1538.57 499.83 L1541.23 501.82 L1543.88 494.52 L1546.54 506.47 L1548.53 501.16 L1549.86 507.80 L1551.85 500.49 L1553.84 501.16 L1556.49 497.84 L1559.15 501.82 L1560.48 497.84 L1563.13 499.83 L1565.79 498.50 L1567.12 502.49 L1569.11 495.85 L1569.77 511.12 L1572.43 510.45 L1574.42 503.81 L1577.07 491.86 L1579.73 506.47 L1581.72 502.49 L1585.04 501.82 L1586.37 497.84 L1587.30 505.80 L1589.02 494.52 L1590.35 505.14 L1593.01 503.81 L1595.00 496.51 L1596.99 495.85 L1598.98 508.46 L1600.31 505.14 L1601.64 505.80" fill="none" stroke="#3b82f6" stroke-width="2" stroke-linejoin="round"/><path d="M557.70 831.90 L559.37 831.90 L561.03 825.53 L562.70 831.90 L564.37 831.90 L566.03 831.90 L567.70 828.18 L569.37 831.90 L571.03 831.90 L572.70 831.90 L574.37 831.90 L576.03 812.26 L577.70 831.90 L579.37 831.90 L581.03 831.90 L582.70 831.90 L584.36 831.90 L586.03 831.90 L587.70 825.53 L589.36 831.90 L591.03 831.90 L592.70 823.54 L594.36 831.90 L596.03 831.90 L597.70 831.90 L599.36 831.90 L601.03 831.90 L602.70 831.90 L604.36 827.52 L606.03 831.90 L607.70 831.90 L609.36 807.61 L611.03 831.90 L612.70 831.90 L614.36 831.90 L616.03 831.90 L617.70 811.60 L619.36 831.90 L621.03 831.90 L622.70 831.90 L624.36 831.90 L626.03 831.90 L627.70 831.90 L629.36 821.55 L631.03 831.90 L632.69 831.90 L634.36 831.90 L636.03 823.54 L637.69 831.90 L639.36 831.90 L641.03 831.90 L642.69 831.90 L644.36 831.90 L646.03 818.23 L647.69 831.90 L649.36 831.90 L651.03 822.21 L652.69 823.54 L654.36 831.90 L656.03 831.90 L657.69 831.90 L659.36 831.90 L661.03 801.64 L662.69 831.90 L664.36 831.90 L666.03 831.90 L667.69 831.90 L669.36 831.90 L671.03 794.34 L672.69 831.90 L674.36 831.90 L676.03 831.90 L677.69 831.90 L679.36 825.53 L681.02 831.90 L682.69 831.90 L684.36 831.90 L686.02 831.90 L687.69 801.64 L689.36 831.90 L691.02 831.90 L692.69 831.90 L694.36 823.54 L696.02 831.90 L697.69 831.90 L699.36 827.52 L701.02 831.90 L702.69 831.90 L704.36 831.90 L706.02 831.90 L707.69 831.90 L709.36 831.90 L711.02 820.49 L712.69 831.90 L714.36 831.90 L716.02 831.90 L717.69 831.90 L719.36 728.65 L721.02 831.90 L722.69 831.90 L724.36 825.53 L726.02 831.90 L727.69 831.90 L729.35 831.90 L731.02 831.90 L732.69 831.90 L734.35 831.90 L736.02 831.90 L737.69 831.90 L739.35 831.90 L741.02 827.52 L742.69 831.90 L744.35 831.90 L746.02 831.90 L747.69 817.57 L749.35 831.90 L751.02 831.90 L752.69 823.54 L754.35 831.90 L756.02 831.90 L757.69 831.90 L759.35 828.85 L761.02 831.90 L762.69 831.90 L764.35 831.90 L766.02 831.90 L767.69 831.90 L769.35 831.90 L771.02 831.90 L772.69 831.90 L774.35 831.90 L776.02 821.55 L777.68 831.90 L779.35 820.89 L781.02 831.90 L782.68 831.90 L784.35 831.90 L786.02 822.88 L787.68 831.90 L789.35 831.90 L791.02 831.90 L792.68 831.90 L794.35 831.90 L796.02 831.90 L797.68 831.90 L799.35 822.88 L801.02 831.90 L802.68 824.20 L804.35 831.90 L806.02 831.90 L807.68 811.60 L809.35 831.90 L811.02 831.90 L812.68 831.90 L814.35 820.89 L816.02 831.90 L817.68 822.21 L819.35 831.90 L821.01 831.90 L822.68 831.90 L824.35 831.90 L826.01 831.90 L827.68 812.92 L829.35 831.90 L831.01 831.90 L832.68 831.90 L834.35 803.63 L836.01 831.90 L837.68 831.90 L839.35 831.90 L841.01 831.90 L842.68 824.20 L844.35 831.90 L846.01 816.90 L847.68 831.90 L849.35 831.90 L851.01 831.90 L852.68 827.52 L854.35 831.90 L856.01 831.90 L857.68 822.88 L859.35 831.90 L861.01 831.90 L862.68 824.20 L864.35 831.90 L866.01 831.90 L867.68 831.90 L869.34 820.89 L871.01 831.90 L872.68 831.90 L874.34 831.90 L876.01 831.90 L877.68 831.90 L879.34 831.90 L881.01 823.54 L882.68 831.90 L884.34 831.90 L886.01 816.24 L887.68 831.90 L889.34 831.90 L891.01 831.90 L892.68 831.90 L894.34 826.19 L896.01 831.90 L897.68 820.22 L899.34 831.90 L901.01 831.90 L902.68 822.21 L904.34 831.90 L906.01 827.52 L907.68 831.90 L909.34 831.90 L911.01 831.90 L912.68 831.90 L914.34 822.21 L916.01 831.90 L917.67 831.90 L919.34 816.24 L921.01 831.90 L922.67 831.90 L924.34 831.90 L926.01 831.90 L927.67 826.19 L929.34 831.90 L931.01 831.90 L932.67 831.90 L934.34 756.52 L936.01 831.90 L937.67 831.90 L939.34 831.90 L941.01 831.90 L942.67 831.90 L944.34 831.90 L946.01 803.63 L947.67 831.90 L949.34 831.90 L951.01 831.90 L952.67 831.90 L954.34 821.55 L956.01 831.90 L957.67 831.90 L959.34 826.19 L961.01 831.90 L962.67 831.90 L964.34 831.90 L966.00 831.90 L967.67 831.90 L969.34 818.23 L971.00 831.90 L972.67 831.90 L974.34 818.23 L976.00 831.90 L977.67 831.90 L979.34 821.55 L981.00 831.90 L982.67 831.90 L984.34 831.90 L986.00 811.60 L987.67 831.90 L989.34 831.90 L991.00 831.90 L992.67 831.90 L994.34 831.90 L996.00 831.90 L997.67 831.90 L999.34 797.66 L1001.00 831.90 L1002.67 813.59 L1004.34 831.90 L1006.00 831.90 L1007.67 831.90 L1009.34 816.24 L1011.00 831.90 L1012.67 831.90 L1014.33 831.90 L1016.00 831.90 L1017.67 831.90 L1019.33 820.89 L1021.00 831.90 L1022.67 820.89 L1024.33 831.90 L1026.00 831.90 L1027.67 831.90 L1029.33 823.54 L1031.00 831.90 L1032.67 831.90 L1034.33 822.21 L1036.00 831.90" fill="none" stroke="#f59e0b" stroke-width="2" stroke-linejoin="round"/><path d="M557.70 831.90 L559.37 831.90 L561.03 831.90 L562.70 831.90 L564.37 827.52 L566.03 829.49 L567.70 830.58 L569.37 825.53 L571.03 828.40 L572.70 829.97 L574.37 830.84 L576.03 827.52 L577.70 829.49 L579.37 830.58 L581.03 809.60 L582.70 819.64 L584.36 825.16 L586.03 828.19 L587.70 829.86 L589.36 830.78 L591.03 831.90 L592.70 826.86 L594.36 829.13 L596.03 830.37 L597.70 831.06 L599.36 831.44 L601.03 831.65 L602.70 831.90 L604.36 831.90 L606.03 831.90 L607.70 831.90 L609.36 825.53 L611.03 828.40 L612.70 829.97 L614.36 830.84 L616.03 831.32 L617.70 825.53 L619.36 828.40 L621.03 829.97 L622.70 830.84 L624.36 831.32 L626.03 831.58 L627.70 831.90 L629.36 822.21 L631.03 826.57 L632.69 828.97 L634.36 830.29 L636.03 831.01 L637.69 831.41 L639.36 831.90 L641.03 831.90 L642.69 831.90 L644.36 831.90 L646.03 827.52 L647.69 829.49 L649.36 830.58 L651.03 827.52 L652.69 829.49 L654.36 830.58 L656.03 831.17 L657.69 831.50 L659.36 831.68 L661.03 825.53 L662.69 828.40 L664.36 829.97 L666.03 830.84 L667.69 831.32 L669.36 831.58 L671.03 806.29 L672.69 817.81 L674.36 824.15 L676.03 827.64 L677.69 829.56 L679.36 830.61 L681.02 831.90 L682.69 831.90 L684.36 831.90 L686.02 831.90 L687.69 823.54 L689.36 827.30 L691.02 829.37 L692.69 830.51 L694.36 827.52 L696.02 829.49 L697.69 830.58 L699.36 831.17 L701.02 831.50 L702.69 831.68 L704.36 831.90 L706.02 826.86 L707.69 829.13 L709.36 830.37 L711.02 823.54 L712.69 827.30 L714.36 829.37 L716.02 830.51 L717.69 831.13 L719.36 798.99 L721.02 813.80 L722.69 821.94 L724.36 825.53 L726.02 828.40 L727.69 829.97 L729.35 830.84 L731.02 828.85 L732.69 830.22 L734.35 830.98 L736.02 831.39 L737.69 831.62 L739.35 831.75 L741.02 828.85 L742.69 830.22 L744.35 830.98 L746.02 831.39 L747.69 827.52 L749.35 829.49 L751.02 830.58 L752.69 831.17 L754.35 831.50 L756.02 827.52 L757.69 829.49 L759.35 830.58 L761.02 831.17 L762.69 831.50 L764.35 823.54 L766.02 827.30 L767.69 827.52 L769.35 829.49 L771.02 830.58 L772.69 831.17 L774.35 831.50 L776.02 831.68 L777.68 831.90 L779.35 821.55 L781.02 826.21 L782.68 828.77 L784.35 830.18 L786.02 828.85 L787.68 830.22 L789.35 830.98 L791.02 826.86 L792.68 829.13 L794.35 830.37 L796.02 831.06 L797.68 831.44 L799.35 826.86 L801.02 829.13 L802.68 830.37 L804.35 831.06 L806.02 831.44 L807.68 825.53 L809.35 828.40 L811.02 829.97 L812.68 825.53 L814.35 823.54 L816.02 827.30 L817.68 829.37 L819.35 830.51 L821.01 831.13 L822.68 826.86 L824.35 829.13 L826.01 830.37 L827.68 826.86 L829.35 829.13 L831.01 830.37 L832.68 831.06 L834.35 831.44 L836.01 825.53 L837.68 828.40 L839.35 829.97 L841.01 830.84 L842.68 831.32 L844.35 831.58 L846.01 820.89 L847.68 825.84 L849.35 828.57 L851.01 830.07 L852.68 830.89 L854.35 831.35 L856.01 831.90 L857.68 831.90 L859.35 813.59 L861.01 821.83 L862.68 826.36 L864.35 828.85 L866.01 830.22 L867.68 830.98 L869.34 831.90 L871.01 831.90 L872.68 831.90 L874.34 816.90 L876.01 823.65 L877.68 827.36 L879.34 829.41 L881.01 827.52 L882.68 829.49 L884.34 830.58 L886.01 823.54 L887.68 827.30 L889.34 829.37 L891.01 830.51 L892.68 828.85 L894.34 830.22 L896.01 830.98 L897.68 828.18 L899.34 829.86 L901.01 830.78 L902.68 828.85 L904.34 830.22 L906.01 830.98 L907.68 831.39 L909.34 831.62 L911.01 831.75 L912.68 831.90 L914.34 831.90 L916.01 831.90 L917.67 831.90 L919.34 827.52 L921.01 829.49 L922.67 830.58 L924.34 831.17 L926.01 831.50 L927.67 827.52 L929.34 829.49 L931.01 830.58 L932.67 831.17 L934.34 813.59 L936.01 821.83 L937.67 826.36 L939.34 828.85 L941.01 830.22 L942.67 830.98 L944.34 831.90 L946.01 825.53 L947.67 828.40 L949.34 829.97 L951.01 830.84 L952.67 831.32 L954.34 831.58 L956.01 826.86 L957.67 829.13 L959.34 830.37 L961.01 831.06 L962.67 826.86 L964.34 829.13 L966.00 830.37 L967.67 831.06 L969.34 821.55 L971.00 826.21 L972.67 828.77 L974.34 830.18 L976.00 827.52 L977.67 829.49 L979.34 830.58 L981.00 831.17 L982.67 831.50 L984.34 831.68 L986.00 822.21 L987.67 826.57 L989.34 828.97 L991.00 830.29 L992.67 831.01 L994.34 831.41 L996.00 831.90 L997.67 831.90 L999.34 804.96 L1001.00 817.08 L1002.67 821.55 L1004.34 826.21 L1006.00 828.77 L1007.67 830.18 L1009.34 830.95 L1011.00 828.18 L1012.67 829.86 L1014.33 830.78 L1016.00 831.28 L1017.67 831.56 L1019.33 831.71 L1021.00 831.90 L1022.67 831.90 L1024.33 821.55 L1026.00 826.21 L1027.67 828.77 L1029.33 830.18 L1031.00 830.95 L1032.67 831.38 L1034.33 831.90 L1036.00 828.85" fill="none" stroke="#3b82f6" stroke-width="2" stroke-linejoin="round"/><path d="M557.70 831.90 L559.37 831.90 L561.03 831.90 L562.70 831.90 L564.37 831.90 L566.03 831.90 L567.70 831.90 L569.37 831.90 L571.03 831.90 L572.70 831.90 L574.37 831.90 L576.03 831.90 L577.70 831.90 L579.37 831.90 L581.03 821.55 L582.70 824.65 L584.36 826.83 L586.03 828.35 L587.70 829.41 L589.36 830.16 L591.03 831.90 L592.70 831.90 L594.36 831.90 L596.03 831.90 L597.70 831.90 L599.36 831.90 L601.03 831.90 L602.70 831.90 L604.36 831.90 L606.03 831.90 L607.70 831.90 L609.36 828.85 L611.03 829.76 L612.70 830.40 L614.36 830.85 L616.03 831.17 L617.70 831.39 L619.36 831.90 L621.03 831.90 L622.70 831.90 L624.36 831.90 L626.03 831.90 L627.70 831.90 L629.36 828.18 L631.03 829.30 L632.69 830.08 L634.36 830.63 L636.03 831.01 L637.69 831.28 L639.36 831.90 L641.03 831.90 L642.69 831.90 L644.36 831.90 L646.03 831.90 L647.69 831.90 L649.36 831.90 L651.03 831.90 L652.69 831.90 L654.36 831.90 L656.03 831.90 L657.69 831.90 L659.36 831.90 L661.03 828.85 L662.69 829.76 L664.36 830.40 L666.03 830.85 L667.69 831.17 L669.36 831.39 L671.03 821.55 L672.69 824.65 L674.36 826.83 L676.03 828.35 L677.69 829.41 L679.36 830.16 L681.02 831.90 L682.69 831.90 L684.36 831.90 L686.02 831.90 L687.69 828.18 L689.36 829.30 L691.02 830.08 L692.69 830.63 L694.36 831.01 L696.02 831.28 L697.69 831.90 L699.36 831.90 L701.02 831.90 L702.69 831.90 L704.36 831.90 L706.02 831.90 L707.69 831.90 L709.36 831.90 L711.02 831.90 L712.69 831.90 L714.36 831.90 L716.02 831.90 L717.69 831.90 L719.36 821.55 L721.02 824.65 L722.69 826.83 L724.36 827.52 L726.02 828.83 L727.69 829.75 L729.35 830.40 L731.02 830.85 L732.69 831.16 L734.35 831.90 L736.02 831.90 L737.69 831.90 L739.35 831.90 L741.02 831.90 L742.69 831.90 L744.35 831.90 L746.02 831.90 L747.69 831.90 L749.35 831.90 L751.02 831.90 L752.69 831.90 L754.35 831.90 L756.02 831.90 L757.69 831.90 L759.35 831.90 L761.02 831.90 L762.69 831.90 L764.35 828.85 L766.02 829.76 L767.69 830.40 L769.35 830.85 L771.02 831.17 L772.69 831.39 L774.35 831.90 L776.02 831.90 L777.68 831.90 L779.35 828.18 L781.02 829.30 L782.68 830.08 L784.35 830.63 L786.02 831.01 L787.68 831.28 L789.35 831.90 L791.02 831.90 L792.68 831.90 L794.35 831.90 L796.02 831.90 L797.68 831.90 L799.35 831.90 L801.02 831.90 L802.68 831.90 L804.35 831.90 L806.02 831.90 L807.68 831.90 L809.35 831.90 L811.02 831.90 L812.68 831.90 L814.35 831.90 L816.02 831.90 L817.68 831.90 L819.35 831.90 L821.01 831.90 L822.68 831.90 L824.35 831.90 L826.01 831.90 L827.68 831.90 L829.35 831.90 L831.01 831.90 L832.68 831.90 L834.35 828.85 L836.01 829.76 L837.68 830.40 L839.35 830.85 L841.01 831.17 L842.68 831.39 L844.35 831.90 L846.01 828.18 L847.68 829.30 L849.35 830.08 L851.01 830.63 L852.68 831.01 L854.35 831.28 L856.01 831.90 L857.68 831.90 L859.35 821.55 L861.01 824.65 L862.68 826.83 L864.35 826.86 L866.01 828.37 L867.68 829.43 L869.34 830.17 L871.01 830.69 L872.68 831.05 L874.34 822.88 L876.01 825.58 L877.68 827.48 L879.34 828.80 L881.01 829.73 L882.68 830.38 L884.34 831.90 L886.01 828.18 L887.68 829.30 L889.34 830.08 L891.01 830.63 L892.68 831.01 L894.34 831.28 L896.01 831.90 L897.68 831.90 L899.34 831.90 L901.01 831.90 L902.68 831.90 L904.34 831.90 L906.01 831.90 L907.68 831.90 L909.34 831.90 L911.01 831.90 L912.68 831.90 L914.34 831.90 L916.01 831.90 L917.67 831.90 L919.34 831.90 L921.01 831.90 L922.67 831.90 L924.34 831.90 L926.01 831.90 L927.67 831.90 L929.34 831.90 L931.01 831.90 L932.67 831.90 L934.34 827.52 L936.01 828.83 L937.67 829.75 L939.34 830.40 L941.01 830.85 L942.67 831.16 L944.34 831.90 L946.01 828.85 L947.67 829.76 L949.34 830.40 L951.01 830.85 L952.67 831.17 L954.34 831.39 L956.01 831.90 L957.67 831.90 L959.34 831.90 L961.01 831.90 L962.67 831.90 L964.34 831.90 L966.00 831.90 L967.67 831.90 L969.34 828.18 L971.00 829.30 L972.67 830.08 L974.34 830.63 L976.00 831.01 L977.67 831.28 L979.34 831.90 L981.00 831.90 L982.67 831.90 L984.34 831.90 L986.00 828.85 L987.67 829.76 L989.34 830.40 L991.00 830.85 L992.67 831.17 L994.34 831.39 L996.00 831.90 L997.67 831.90 L999.34 821.55 L1001.00 824.65 L1002.67 824.20 L1004.34 826.51 L1006.00 828.13 L1007.67 829.26 L1009.34 830.05 L1011.00 830.61 L1012.67 831.90 L1014.33 831.90 L1016.00 831.90 L1017.67 831.90 L1019.33 831.90 L1021.00 831.90 L1022.67 831.90 L1024.33 831.90 L1026.00 828.18 L1027.67 829.30 L1029.33 830.08 L1031.00 830.63 L1032.67 831.01 L1034.33 831.28 L1036.00 831.90" fill="none" stroke="#a855f7" stroke-width="2" stroke-linejoin="round"/><path d="M1123.20 812.84 L1124.87 812.84 L1126.54 812.84 L1128.20 812.84 L1129.87 812.84 L1131.54 812.84 L1133.21 812.84 L1134.88 812.84 L1136.55 812.84 L1138.21 812.84 L1139.88 812.84 L1141.55 812.84 L1143.22 812.84 L1144.89 812.84 L1146.56 812.84 L1148.22 812.84 L1149.89 812.84 L1151.56 812.84 L1153.23 812.84 L1154.90 812.84 L1156.57 812.84 L1158.23 812.84 L1159.90 812.84 L1161.57 812.84 L1163.24 812.84 L1164.91 812.84 L1166.58 812.84 L1168.24 812.84 L1169.91 812.84 L1171.58 812.84 L1173.25 812.84 L1174.92 812.84 L1176.59 812.84 L1178.25 812.84 L1179.92 812.84 L1181.59 812.84 L1183.26 812.84 L1184.93 812.84 L1186.60 812.84 L1188.26 812.84 L1189.93 812.84 L1191.60 812.84 L1193.27 812.84 L1194.94 812.84 L1196.60 812.84 L1198.27 812.84 L1199.94 812.84 L1201.61 812.84 L1203.28 812.84 L1204.95 812.84 L1206.61 812.84 L1208.28 812.84 L1209.95 812.84 L1211.62 812.84 L1213.29 812.84 L1214.96 812.84 L1216.62 812.84 L1218.29 812.84 L1219.96 812.84 L1221.63 812.84 L1223.30 812.84 L1224.97 812.84 L1226.63 812.84 L1228.30 812.84 L1229.97 809.06 L1231.64 812.84 L1233.31 812.84 L1234.98 807.04 L1234.98 832.00 L1123.20 832.00 Z" fill="rgba(245,158,11,0.12)" stroke="none"/><path d="M1236.64 804.63 L1238.31 812.84 L1239.98 812.84 L1241.65 812.84 L1243.32 812.84 L1244.99 809.06 L1246.65 812.84 L1248.32 812.84 L1249.99 812.84 L1251.66 812.84 L1253.33 812.84 L1255.00 812.84 L1256.66 812.84 L1258.33 812.84 L1260.00 812.84 L1261.67 812.84 L1263.34 812.84 L1265.00 812.84 L1266.67 812.84 L1268.34 812.84 L1270.01 812.84 L1271.68 812.84 L1273.35 812.84 L1275.01 812.84 L1276.68 812.84 L1278.35 812.84 L1280.02 812.84 L1281.69 812.84 L1283.36 812.84 L1285.02 812.84 L1286.69 812.84 L1288.36 812.84 L1290.03 812.84 L1291.70 812.84 L1293.37 809.06 L1295.03 812.84 L1296.70 812.84 L1298.37 812.84 L1300.04 812.84 L1301.71 812.84 L1303.38 812.84 L1305.04 812.84 L1306.71 812.84 L1308.38 812.84 L1310.05 812.84 L1311.72 812.84 L1313.39 812.84 L1315.05 812.84 L1316.72 812.84 L1318.39 809.06 L1320.06 812.84 L1321.73 812.84 L1323.40 812.84 L1325.06 812.84 L1326.73 812.84 L1328.40 812.84 L1330.07 812.84 L1331.74 812.84 L1333.40 812.84 L1335.07 812.84 L1336.74 812.84 L1338.41 812.84 L1340.08 812.84 L1341.75 812.84 L1343.41 812.84 L1345.08 812.84 L1346.75 812.84 L1348.42 812.84 L1350.09 812.84 L1351.76 812.84 L1353.42 812.84 L1355.09 812.84 L1356.76 812.84 L1358.43 812.84 L1360.10 812.84 L1361.77 812.84 L1363.43 812.84 L1365.10 812.84 L1366.77 812.84 L1368.44 812.84 L1370.11 755.52 L1371.78 812.84 L1373.44 812.84 L1375.11 812.84 L1376.78 812.84 L1378.45 812.84 L1380.12 812.84 L1381.79 812.84 L1383.45 812.84 L1385.12 812.84 L1386.79 812.84 L1388.46 812.84 L1390.13 812.84 L1391.80 812.84 L1393.46 812.84 L1395.13 812.84 L1396.80 812.84 L1398.47 812.84 L1400.14 812.84 L1401.80 812.84 L1403.47 812.84 L1405.14 812.84 L1406.81 812.84 L1408.48 812.84 L1410.15 809.06 L1411.81 812.84 L1413.48 812.84 L1415.15 812.84 L1416.82 812.84 L1418.49 809.06 L1420.16 812.84 L1421.82 809.06 L1423.49 812.84 L1425.16 812.84 L1426.83 812.84 L1428.50 812.84 L1430.17 812.84 L1431.83 812.84 L1433.50 812.84 L1435.17 812.84 L1436.84 812.84 L1438.51 809.06 L1440.18 812.84 L1441.84 812.84 L1443.51 812.84 L1445.18 812.84 L1446.85 812.84 L1448.52 812.84 L1450.19 812.84 L1451.85 812.84 L1453.52 812.84 L1455.19 812.84 L1456.86 812.84 L1458.53 812.84 L1460.20 812.84 L1461.86 812.84 L1463.53 812.84 L1465.20 812.84 L1466.87 812.84 L1468.54 812.84 L1470.20 812.84 L1471.87 812.84 L1473.54 812.84 L1475.21 812.84 L1476.88 812.84 L1478.55 812.84 L1480.21 812.84 L1481.88 812.84 L1483.55 812.84 L1485.22 809.06 L1486.89 812.84 L1488.56 812.84 L1490.22 812.84 L1491.89 812.84 L1493.56 812.84 L1495.23 812.84 L1496.90 812.84 L1498.57 812.84 L1500.23 812.84 L1501.90 812.84 L1503.57 812.84 L1505.24 812.84 L1506.91 812.84 L1508.58 812.84 L1510.24 812.84 L1511.91 812.84 L1513.58 812.84 L1515.25 812.84 L1516.92 812.84 L1518.59 812.84 L1520.25 812.84 L1521.92 812.84 L1523.59 812.84 L1525.26 812.84 L1526.93 812.84 L1528.60 812.84 L1530.26 812.84 L1531.93 812.84 L1533.60 812.84 L1535.27 812.84 L1536.94 812.84 L1538.60 812.84 L1540.27 812.84 L1541.94 812.84 L1543.61 812.84 L1545.28 812.84 L1546.95 809.06 L1548.61 812.84 L1550.28 812.84 L1551.95 812.84 L1553.62 812.84 L1555.29 812.84 L1556.96 809.06 L1558.62 812.84 L1560.29 812.84 L1561.96 812.84 L1563.63 812.84 L1565.30 812.84 L1566.97 812.84 L1568.63 812.84 L1570.30 812.84 L1571.97 812.84 L1573.64 812.84 L1575.31 812.84 L1576.98 812.84 L1578.64 812.84 L1580.31 812.84 L1581.98 812.84 L1583.65 809.06 L1585.32 812.84 L1586.99 812.84 L1588.65 812.84 L1590.32 812.84 L1591.99 812.84 L1593.66 812.84 L1595.33 812.84 L1597.00 812.84 L1598.66 812.84 L1600.33 812.84 L1602.00 812.84 L1602.00 832.00 L1236.64 832.00 Z" fill="rgba(245,158,11,0.12)" stroke="none"/><path d="M1123.20 831.03 L1124.87 831.03 L1126.54 831.03 L1128.20 831.03 L1129.87 831.03 L1131.54 831.03 L1133.21 831.03 L1134.88 831.03 L1136.55 831.03 L1138.21 831.03 L1139.88 831.03 L1141.55 831.03 L1143.22 831.03 L1144.89 831.03 L1146.56 831.03 L1148.22 831.03 L1149.89 831.03 L1151.56 831.03 L1153.23 831.03 L1154.90 831.03 L1156.57 831.03 L1158.23 831.03 L1159.90 831.03 L1161.57 831.03 L1163.24 831.03 L1164.91 831.03 L1166.58 831.03 L1168.24 831.03 L1169.91 831.03 L1171.58 831.03 L1173.25 831.03 L1174.92 831.03 L1176.59 831.03 L1178.25 831.03 L1179.92 831.03 L1181.59 831.03 L1183.26 831.03 L1184.93 831.03 L1186.60 831.03 L1188.26 831.03 L1189.93 831.03 L1191.60 831.03 L1193.27 831.03 L1194.94 831.03 L1196.60 831.03 L1198.27 831.03 L1199.94 831.03 L1201.61 831.03 L1203.28 831.03 L1204.95 831.03 L1206.61 831.03 L1208.28 831.03 L1209.95 831.03 L1211.62 831.03 L1213.29 831.03 L1214.96 831.03 L1216.62 831.03 L1218.29 831.03 L1219.96 831.03 L1221.63 831.03 L1223.30 831.03 L1224.97 831.03 L1226.63 831.03 L1228.30 831.03 L1229.97 831.03 L1231.64 831.03 L1233.31 831.03 L1234.98 831.03" fill="none" stroke="#2aa6d8" stroke-width="2" stroke-linejoin="round"/><path d="M1236.64 828.78 L1238.31 831.03 L1239.98 831.03 L1241.65 831.03 L1243.32 831.03 L1244.99 831.03 L1246.65 831.03 L1248.32 831.03 L1249.99 831.03 L1251.66 831.03 L1253.33 831.03 L1255.00 831.03 L1256.66 831.03 L1258.33 831.03 L1260.00 831.03 L1261.67 831.03 L1263.34 831.03 L1265.00 831.03 L1266.67 831.03 L1268.34 831.03 L1270.01 831.03 L1271.68 831.03 L1273.35 831.03 L1275.01 831.03 L1276.68 831.03 L1278.35 831.03 L1280.02 831.03 L1281.69 831.03 L1283.36 831.03 L1285.02 831.03 L1286.69 831.03 L1288.36 831.03 L1290.03 831.03 L1291.70 831.03 L1293.37 831.03 L1295.03 831.03 L1296.70 831.03 L1298.37 831.03 L1300.04 831.03 L1301.71 831.03 L1303.38 831.03 L1305.04 831.03 L1306.71 831.03 L1308.38 831.03 L1310.05 831.03 L1311.72 831.03 L1313.39 831.03 L1315.05 831.03 L1316.72 831.03 L1318.39 831.03 L1320.06 831.03 L1321.73 831.03 L1323.40 831.03 L1325.06 831.03 L1326.73 831.03 L1328.40 831.03 L1330.07 831.03 L1331.74 831.03 L1333.40 831.03 L1335.07 831.03 L1336.74 831.03 L1338.41 831.03 L1340.08 831.03 L1341.75 831.03 L1343.41 831.03 L1345.08 831.03 L1346.75 831.03 L1348.42 831.03 L1350.09 831.03 L1351.76 831.03 L1353.42 831.03 L1355.09 831.03 L1356.76 831.03 L1358.43 831.03 L1360.10 831.03 L1361.77 831.03 L1363.43 831.03 L1365.10 831.03 L1366.77 831.03 L1368.44 831.03 L1370.11 735.40 L1371.78 831.03 L1373.44 831.03 L1375.11 831.03 L1376.78 831.03 L1378.45 831.03 L1380.12 831.03 L1381.79 831.03 L1383.45 831.03 L1385.12 831.03 L1386.79 831.03 L1388.46 831.03 L1390.13 831.03 L1391.80 831.03 L1393.46 831.03 L1395.13 831.03 L1396.80 831.03 L1398.47 831.03 L1400.14 831.03 L1401.80 831.03 L1403.47 831.03 L1405.14 831.03 L1406.81 831.03 L1408.48 831.03 L1410.15 831.03 L1411.81 831.03 L1413.48 831.03 L1415.15 831.03 L1416.82 831.03 L1418.49 831.03 L1420.16 831.03 L1421.82 831.03 L1423.49 831.03 L1425.16 831.03 L1426.83 831.03 L1428.50 831.03 L1430.17 831.03 L1431.83 831.03 L1433.50 831.03 L1435.17 831.03 L1436.84 831.03 L1438.51 831.03 L1440.18 831.03 L1441.84 831.03 L1443.51 831.03 L1445.18 831.03 L1446.85 831.03 L1448.52 831.03 L1450.19 831.03 L1451.85 831.03 L1453.52 831.03 L1455.19 831.03 L1456.86 831.03 L1458.53 831.03 L1460.20 831.03 L1461.86 831.03 L1463.53 831.03 L1465.20 831.03 L1466.87 831.03 L1468.54 831.03 L1470.20 831.03 L1471.87 831.03 L1473.54 831.03 L1475.21 831.03 L1476.88 831.03 L1478.55 831.03 L1480.21 831.03 L1481.88 831.03 L1483.55 831.03 L1485.22 831.03 L1486.89 831.03 L1488.56 831.03 L1490.22 831.03 L1491.89 831.03 L1493.56 831.03 L1495.23 831.03 L1496.90 831.03 L1498.57 831.03 L1500.23 831.03 L1501.90 831.03 L1503.57 831.03 L1505.24 831.03 L1506.91 831.03 L1508.58 831.03 L1510.24 831.03 L1511.91 831.03 L1513.58 831.03 L1515.25 831.03 L1516.92 831.03 L1518.59 831.03 L1520.25 831.03 L1521.92 831.03 L1523.59 831.03 L1525.26 831.03 L1526.93 831.03 L1528.60 831.03 L1530.26 831.03 L1531.93 831.03 L1533.60 831.03 L1535.27 831.03 L1536.94 831.03 L1538.60 831.03 L1540.27 831.03 L1541.94 831.03 L1543.61 831.03 L1545.28 831.03 L1546.95 831.03 L1548.61 831.03 L1550.28 831.03 L1551.95 831.03 L1553.62 831.03 L1555.29 831.03 L1556.96 831.03 L1558.62 831.03 L1560.29 831.03 L1561.96 831.03 L1563.63 831.03 L1565.30 831.03 L1566.97 831.03 L1568.63 831.03 L1570.30 831.03 L1571.97 831.03 L1573.64 831.03 L1575.31 831.03 L1576.98 831.03 L1578.64 831.03 L1580.31 831.03 L1581.98 831.03 L1583.65 831.03 L1585.32 831.03 L1586.99 831.03 L1588.65 831.03 L1590.32 831.03 L1591.99 831.03 L1593.66 831.03 L1595.33 831.03 L1597.00 831.03 L1598.66 831.03 L1600.33 831.03 L1602.00 831.03" fill="none" stroke="#2aa6d8" stroke-width="2" stroke-linejoin="round"/><path d="M1123.20 812.84 L1124.87 812.84 L1126.54 812.84 L1128.20 812.84 L1129.87 812.84 L1131.54 812.84 L1133.21 812.84 L1134.88 812.84 L1136.55 812.84 L1138.21 812.84 L1139.88 812.84 L1141.55 812.84 L1143.22 812.84 L1144.89 812.84 L1146.56 812.84 L1148.22 812.84 L1149.89 812.84 L1151.56 812.84 L1153.23 812.84 L1154.90 812.84 L1156.57 812.84 L1158.23 812.84 L1159.90 812.84 L1161.57 812.84 L1163.24 812.84 L1164.91 812.84 L1166.58 812.84 L1168.24 812.84 L1169.91 812.84 L1171.58 812.84 L1173.25 812.84 L1174.92 812.84 L1176.59 812.84 L1178.25 812.84 L1179.92 812.84 L1181.59 812.84 L1183.26 812.84 L1184.93 812.84 L1186.60 812.84 L1188.26 812.84 L1189.93 812.84 L1191.60 812.84 L1193.27 812.84 L1194.94 812.84 L1196.60 812.84 L1198.27 812.84 L1199.94 812.84 L1201.61 812.84 L1203.28 812.84 L1204.95 812.84 L1206.61 812.84 L1208.28 812.84 L1209.95 812.84 L1211.62 812.84 L1213.29 812.84 L1214.96 812.84 L1216.62 812.84 L1218.29 812.84 L1219.96 812.84 L1221.63 812.84 L1223.30 812.84 L1224.97 812.84 L1226.63 812.84 L1228.30 812.84 L1229.97 809.06 L1231.64 812.84 L1233.31 812.84 L1234.98 807.04" fill="none" stroke="#f59e0b" stroke-width="2" stroke-linejoin="round"/><path d="M1236.64 804.63 L1238.31 812.84 L1239.98 812.84 L1241.65 812.84 L1243.32 812.84 L1244.99 809.06 L1246.65 812.84 L1248.32 812.84 L1249.99 812.84 L1251.66 812.84 L1253.33 812.84 L1255.00 812.84 L1256.66 812.84 L1258.33 812.84 L1260.00 812.84 L1261.67 812.84 L1263.34 812.84 L1265.00 812.84 L1266.67 812.84 L1268.34 812.84 L1270.01 812.84 L1271.68 812.84 L1273.35 812.84 L1275.01 812.84 L1276.68 812.84 L1278.35 812.84 L1280.02 812.84 L1281.69 812.84 L1283.36 812.84 L1285.02 812.84 L1286.69 812.84 L1288.36 812.84 L1290.03 812.84 L1291.70 812.84 L1293.37 809.06 L1295.03 812.84 L1296.70 812.84 L1298.37 812.84 L1300.04 812.84 L1301.71 812.84 L1303.38 812.84 L1305.04 812.84 L1306.71 812.84 L1308.38 812.84 L1310.05 812.84 L1311.72 812.84 L1313.39 812.84 L1315.05 812.84 L1316.72 812.84 L1318.39 809.06 L1320.06 812.84 L1321.73 812.84 L1323.40 812.84 L1325.06 812.84 L1326.73 812.84 L1328.40 812.84 L1330.07 812.84 L1331.74 812.84 L1333.40 812.84 L1335.07 812.84 L1336.74 812.84 L1338.41 812.84 L1340.08 812.84 L1341.75 812.84 L1343.41 812.84 L1345.08 812.84 L1346.75 812.84 L1348.42 812.84 L1350.09 812.84 L1351.76 812.84 L1353.42 812.84 L1355.09 812.84 L1356.76 812.84 L1358.43 812.84 L1360.10 812.84 L1361.77 812.84 L1363.43 812.84 L1365.10 812.84 L1366.77 812.84 L1368.44 812.84 L1370.11 755.52 L1371.78 812.84 L1373.44 812.84 L1375.11 812.84 L1376.78 812.84 L1378.45 812.84 L1380.12 812.84 L1381.79 812.84 L1383.45 812.84 L1385.12 812.84 L1386.79 812.84 L1388.46 812.84 L1390.13 812.84 L1391.80 812.84 L1393.46 812.84 L1395.13 812.84 L1396.80 812.84 L1398.47 812.84 L1400.14 812.84 L1401.80 812.84 L1403.47 812.84 L1405.14 812.84 L1406.81 812.84 L1408.48 812.84 L1410.15 809.06 L1411.81 812.84 L1413.48 812.84 L1415.15 812.84 L1416.82 812.84 L1418.49 809.06 L1420.16 812.84 L1421.82 809.06 L1423.49 812.84 L1425.16 812.84 L1426.83 812.84 L1428.50 812.84 L1430.17 812.84 L1431.83 812.84 L1433.50 812.84 L1435.17 812.84 L1436.84 812.84 L1438.51 809.06 L1440.18 812.84 L1441.84 812.84 L1443.51 812.84 L1445.18 812.84 L1446.85 812.84 L1448.52 812.84 L1450.19 812.84 L1451.85 812.84 L1453.52 812.84 L1455.19 812.84 L1456.86 812.84 L1458.53 812.84 L1460.20 812.84 L1461.86 812.84 L1463.53 812.84 L1465.20 812.84 L1466.87 812.84 L1468.54 812.84 L1470.20 812.84 L1471.87 812.84 L1473.54 812.84 L1475.21 812.84 L1476.88 812.84 L1478.55 812.84 L1480.21 812.84 L1481.88 812.84 L1483.55 812.84 L1485.22 809.06 L1486.89 812.84 L1488.56 812.84 L1490.22 812.84 L1491.89 812.84 L1493.56 812.84 L1495.23 812.84 L1496.90 812.84 L1498.57 812.84 L1500.23 812.84 L1501.90 812.84 L1503.57 812.84 L1505.24 812.84 L1506.91 812.84 L1508.58 812.84 L1510.24 812.84 L1511.91 812.84 L1513.58 812.84 L1515.25 812.84 L1516.92 812.84 L1518.59 812.84 L1520.25 812.84 L1521.92 812.84 L1523.59 812.84 L1525.26 812.84 L1526.93 812.84 L1528.60 812.84 L1530.26 812.84 L1531.93 812.84 L1533.60 812.84 L1535.27 812.84 L1536.94 812.84 L1538.60 812.84 L1540.27 812.84 L1541.94 812.84 L1543.61 812.84 L1545.28 812.84 L1546.95 809.06 L1548.61 812.84 L1550.28 812.84 L1551.95 812.84 L1553.62 812.84 L1555.29 812.84 L1556.96 809.06 L1558.62 812.84 L1560.29 812.84 L1561.96 812.84 L1563.63 812.84 L1565.30 812.84 L1566.97 812.84 L1568.63 812.84 L1570.30 812.84 L1571.97 812.84 L1573.64 812.84 L1575.31 812.84 L1576.98 812.84 L1578.64 812.84 L1580.31 812.84 L1581.98 812.84 L1583.65 809.06 L1585.32 812.84 L1586.99 812.84 L1588.65 812.84 L1590.32 812.84 L1591.99 812.84 L1593.66 812.84 L1595.33 812.84 L1597.00 812.84 L1598.66 812.84 L1600.33 812.84 L1602.00 812.84" fill="none" stroke="#f59e0b" stroke-width="2" stroke-linejoin="round"/><g font-family='"Liberation Sans", sans-serif' font-size="11" fill="#7a879b"><text x="541.3" y="577.20" text-anchor="end" letter-spacing="-0.35">0.0%</text><text x="541.3" y="541.20" text-anchor="end" letter-spacing="-0.35">2.5%</text><text x="541.3" y="505.20" text-anchor="end" letter-spacing="-0.35">5.0%</text><text x="541.3" y="469.20" text-anchor="end" letter-spacing="-0.35">7.5%</text><text x="584.30" y="598" text-anchor="middle">6pm</text><text x="644.30" y="598" text-anchor="middle">9pm</text><text x="704.30" y="598" text-anchor="middle">12am</text><text x="764.30" y="598" text-anchor="middle">3am</text><text x="824.30" y="598" text-anchor="middle">6am</text><text x="884.30" y="598" text-anchor="middle">9am</text><text x="944.30" y="598" text-anchor="middle">12pm</text><text x="1004.30" y="598" text-anchor="middle">3pm</text><text x="584.30" y="613.7" text-anchor="middle">4/15/26</text><text x="704.30" y="613.7" text-anchor="middle">4/16</text><text x="1106.3" y="550.10" text-anchor="end" letter-spacing="-0.35">27.0%</text><text x="1106.3" y="516.65" text-anchor="end" letter-spacing="-0.35">27.5%</text><text x="1106.3" y="483.20" text-anchor="end" letter-spacing="-0.35">28.0%</text><text x="1149.30" y="598" text-anchor="middle">6pm</text><text x="1209.30" y="598" text-anchor="middle">9pm</text><text x="1269.30" y="598" text-anchor="middle">12am</text><text x="1329.30" y="598" text-anchor="middle">3am</text><text x="1389.30" y="598" text-anchor="middle">6am</text><text x="1449.30" y="598" text-anchor="middle">9am</text><text x="1509.30" y="598" text-anchor="middle">12pm</text><text x="1569.30" y="598" text-anchor="middle">3pm</text><text x="1149.30" y="613.7" text-anchor="middle">4/15/26</text><text x="1269.30" y="613.7" text-anchor="middle">4/16</text><text x="541.8" y="834.90" text-anchor="end">0.00</text><text x="541.8" y="803.27" text-anchor="end">0.25</text><text x="541.8" y="771.64" text-anchor="end">0.50</text><text x="541.8" y="740.01" text-anchor="end">0.75</text><text x="584.80" y="856" text-anchor="middle">6pm</text><text x="644.80" y="856" text-anchor="middle">9pm</text><text x="704.80" y="856" text-anchor="middle">12am</text><text x="764.80" y="856" text-anchor="middle">3am</text><text x="824.80" y="856" text-anchor="middle">6am</text><text x="884.80" y="856" text-anchor="middle">9am</text><text x="944.80" y="856" text-anchor="middle">12pm</text><text x="1004.80" y="856" text-anchor="middle">3pm</text><text x="584.80" y="872" text-anchor="middle">4/15/26</text><text x="704.80" y="872" text-anchor="middle">4/16</text><text x="1106.8" y="835.00" text-anchor="end">0 B/s</text><text x="1106.8" y="794.75" text-anchor="end">50 B/s</text><text x="1106.8" y="754.50" text-anchor="end">100 B/s</text><text x="1149.60" y="856" text-anchor="middle">6pm</text><text x="1209.60" y="856" text-anchor="middle">9pm</text><text x="1269.60" y="856" text-anchor="middle">12am</text><text x="1329.60" y="856" text-anchor="middle">3am</text><text x="1389.60" y="856" text-anchor="middle">6am</text><text x="1449.60" y="856" text-anchor="middle">9am</text><text x="1509.60" y="856" text-anchor="middle">12pm</text><text x="1569.60" y="856" text-anchor="middle">3pm</text><text x="1149.60" y="872" text-anchor="middle">4/15/26</text><text x="1269.60" y="872" text-anchor="middle">4/16</text></g><g font-family='"Liberation Sans", sans-serif' font-size="11"><text x="525" y="651" fill="#7f8a9b">Time:</text><text x="571" y="651" fill="#e2e8f0">--</text><rect x="603" y="642" width="10" height="10" rx="1.5" fill="#1c3b42"/><text x="617.3" y="651" fill="#7f8a9b">cpu:</text><rect x="656" y="647.9" width="11.5" height="1.2" fill="#e2e8f0"/><text x="1090" y="651" fill="#7f8a9b">Time:</text><text x="1136" y="651" fill="#e2e8f0">--</text><rect x="1168" y="642" width="10" height="10" rx="1.5" fill="#23334f"/><text x="1182.3" y="651" fill="#7f8a9b">memory:</text><rect x="1244.5" y="647.9" width="11.5" height="1.2" fill="#e2e8f0"/><text x="525" y="909" fill="#7f8a9b">Time:</text><text x="571" y="909" fill="#e2e8f0">--</text><rect x="603.5" y="900" width="10" height="10" rx="1.5" fill="#3a3834"/><text x="617.8" y="909" fill="#7f8a9b">1m:</text><rect x="650" y="905.9" width="11.5" height="1.2" fill="#e2e8f0"/><rect x="687.4" y="900" width="10" height="10" rx="1.5" fill="#23334f"/><text x="701.6999999999999" y="909" fill="#7f8a9b">5m:</text><rect x="735" y="905.9" width="11.5" height="1.2" fill="#e2e8f0"/><rect x="772" y="900" width="10" height="10" rx="1.5" fill="#2d2c4d"/><text x="786.3" y="909" fill="#7f8a9b">15m:</text><rect x="825" y="905.9" width="11.5" height="1.2" fill="#e2e8f0"/><text x="1090" y="909" fill="#7f8a9b">Time:</text><text x="1136" y="909" fill="#e2e8f0">--</text><rect x="1168.3" y="900" width="10" height="10" rx="1.5" fill="#1f3a4e"/><text x="1182.6" y="909" fill="#7f8a9b">rx:</text><rect x="1210" y="905.9" width="11.5" height="1.2" fill="#e2e8f0"/><rect x="1248.5" y="900" width="10" height="10" rx="1.5" fill="#3a3834"/><text x="1262.8" y="909" fill="#7f8a9b">tx:</text><rect x="1290" y="905.9" width="11.5" height="1.2" fill="#e2e8f0"/></g></svg>
</body></html>
